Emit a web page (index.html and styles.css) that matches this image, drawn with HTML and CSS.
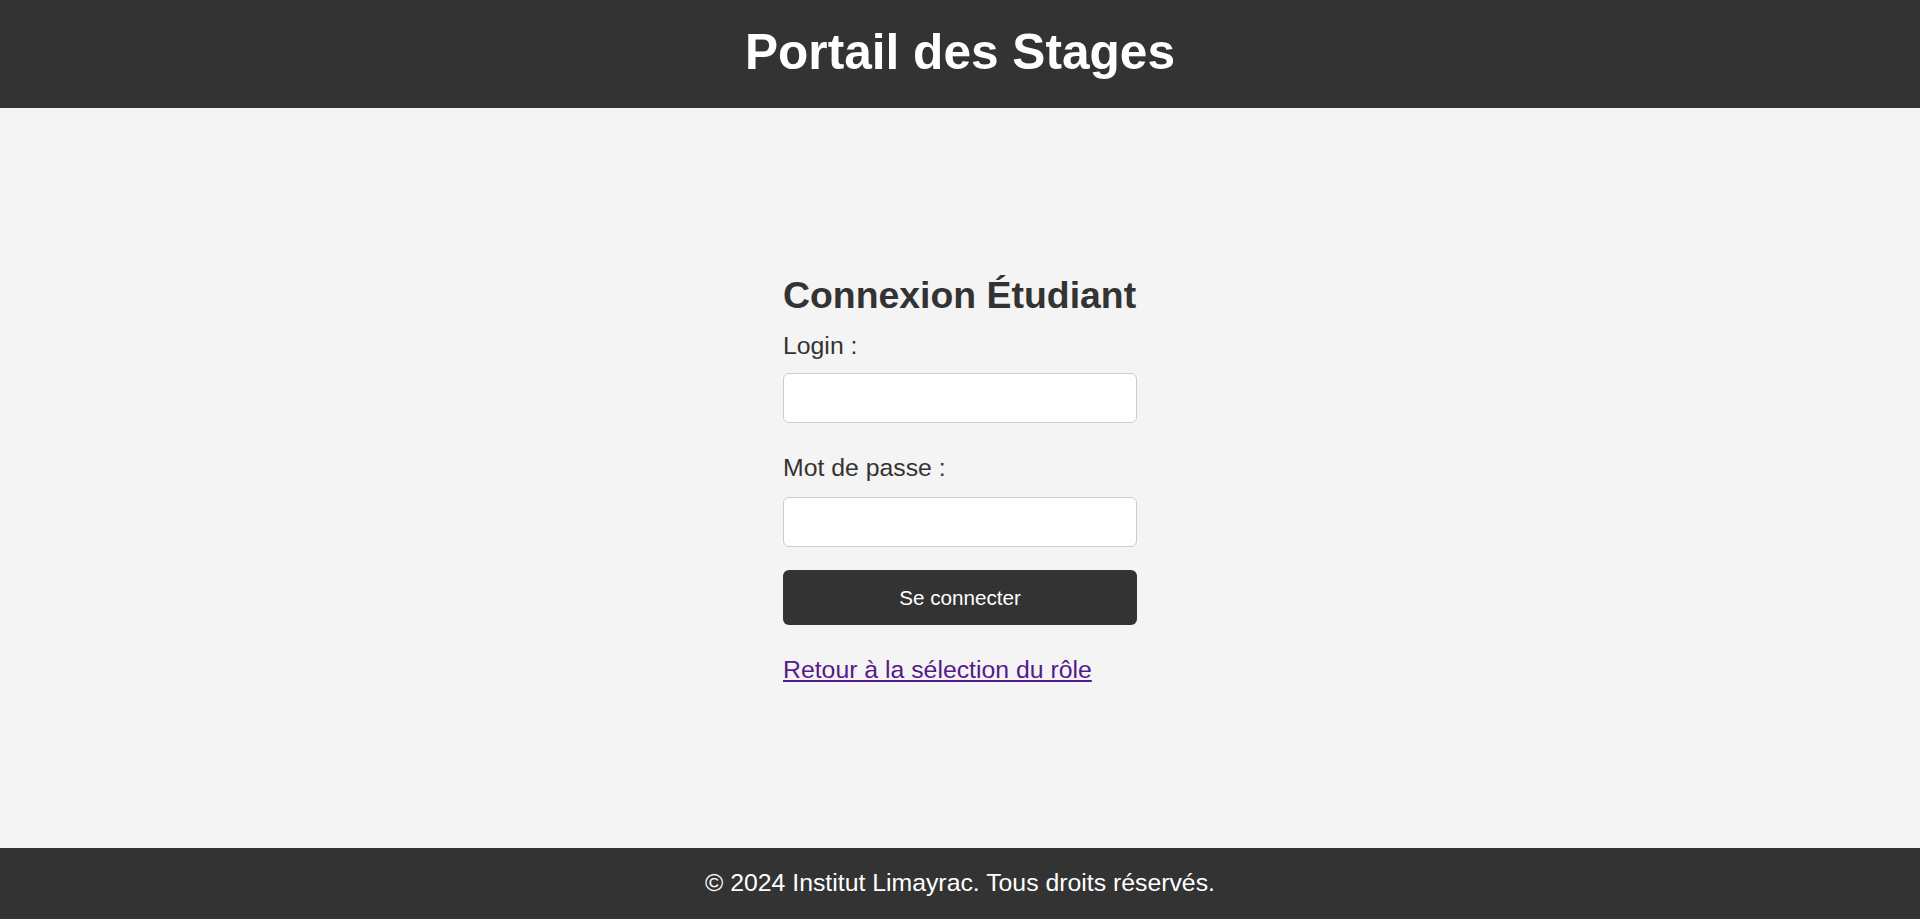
FILE: index.html
```html
<!DOCTYPE html>
<html lang="fr">
<head>
<meta charset="UTF-8">
<title>Portail des Stages - Connexion Étudiant</title>
<link rel="stylesheet" href="styles.css">
</head>
<body>
<header class="site-header">
  <h1 class="site-title">Portail des Stages</h1>
</header>
<main class="site-main">
  <form class="login-form" action="#" onsubmit="return false;">
    <h2 class="login-title">Connexion Étudiant</h2>
    <label class="field-label first" for="login">Login :</label>
    <input class="field-input first" type="text" id="login" name="login">
    <label class="field-label" for="password">Mot de passe :</label>
    <input class="field-input" type="password" id="password" name="password">
    <button class="submit-btn" type="submit">Se connecter</button>
    <a class="back-link" href="#">Retour à la sélection du rôle</a>
  </form>
</main>
<footer class="site-footer">
  <p class="footer-text">© 2024 Institut Limayrac. Tous droits réservés.</p>
</footer>
</body>
</html>
```
FILE: styles.css
```css
* { box-sizing: border-box; }

html, body {
  margin: 0;
  padding: 0;
}

body {
  min-height: 100vh;
  display: flex;
  flex-direction: column;
  background: #f4f4f4;
  color: #333;
  font-family: "Liberation Sans", Arial, Helvetica, sans-serif;
}

.site-header {
  background: #333;
  color: #fff;
  text-align: center;
  padding: 24px 0 27px;
}

.site-title {
  margin: 0;
  font-size: 49.6px;
  line-height: 57px;
  font-weight: bold;
}

.site-main {
  flex: 1;
  display: flex;
  align-items: flex-start;
  justify-content: center;
  padding-top: 166px;
}

.login-form {
  width: 354px;
  display: flex;
  flex-direction: column;
  align-items: stretch;
}

.login-title {
  margin: 0;
  font-size: 37.4px;
  line-height: 43px;
  font-weight: bold;
  color: #333;
}

.field-label {
  display: block;
  margin-top: 31px;
  font-size: 24.8px;
  line-height: 28.5px;
  color: #333;
}

.field-label.first {
  margin-top: 15px;
}

.field-input {
  display: block;
  width: 100%;
  height: 50px;
  margin-top: 14px;
  border: 1px solid #ccc;
  border-radius: 6px;
  background: #fff;
  font-size: 20px;
  padding: 0 12px;
}

.field-input.first {
  margin-top: 12.5px;
}

.submit-btn {
  display: block;
  width: 100%;
  height: 55px;
  margin-top: 23.5px;
  border: none;
  border-radius: 6px;
  background: #333;
  color: #fff;
  font-family: "Liberation Sans", Arial, Helvetica, sans-serif;
  font-size: 20.67px;
  cursor: pointer;
}

.back-link {
  align-self: flex-start;
  margin-top: 31px;
  font-size: 24.8px;
  line-height: 28.5px;
  color: #551a8b;
  text-decoration: underline;
}

.site-footer {
  background: #333;
  color: #fff;
  text-align: center;
  padding: 21px 0 21.5px;
}

.footer-text {
  margin: 0;
  font-size: 24.8px;
  line-height: 28.5px;
}
```
